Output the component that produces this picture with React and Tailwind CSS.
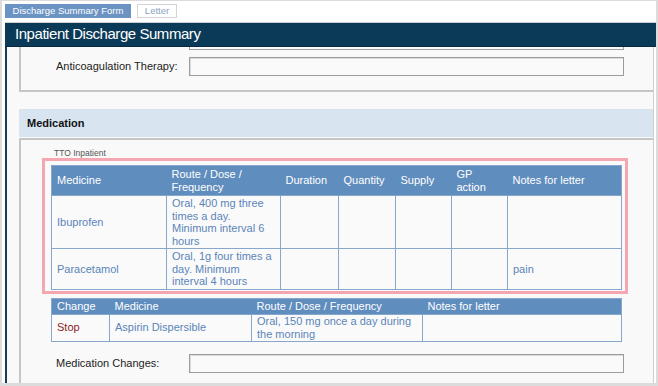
export default function App() {
  const font = "font-['Liberation_Sans',Arial,sans-serif]";
  const th = "text-left align-middle font-normal text-white px-[5px] py-[2px] leading-[12.5px]";
  const td = "align-middle border border-[#87a7cc] px-[5px] py-[1px] leading-[12.5px] text-[#5a85b9]";
  const td2 = "align-middle border border-[#87a7cc] px-[5px] py-0 leading-[12.5px] text-[#5a85b9]";
  const th2 = "text-left align-middle font-normal text-white px-[5px] py-0 leading-[13px]";
  return (
    <div className={`w-[658px] h-[386px] overflow-hidden bg-[#dcdcdc] pl-[2px] pr-[2px] pt-[1px] pb-[3px] flex ${font}`}>
      <div className="flex-1 bg-white flex flex-col overflow-hidden">
        <div className="flex gap-[6px] pl-[3px] pt-[3px] h-[21px] shrink-0">
          <div className="h-[14px] w-[126px] bg-[#6b93c3] text-white text-[9.5px] leading-[14px] flex items-center justify-center">
            Discharge Summary Form
          </div>
          <div className="h-[14px] w-[40px] border border-[#d4d4d4] bg-white text-[#8ca3c2] text-[9.5px] leading-[12px] flex items-center justify-center">
            Letter
          </div>
        </div>
        <div className="ml-[3px] h-[25px] shrink-0 border-t border-[#cfcfcf] border-b border-b-[#062c44] bg-[#0b3a58] pl-[10px] flex items-center text-white text-[15px] tracking-[-0.45px]">
          Inpatient Discharge Summary
        </div>
        <div className="flex-1 ml-[3px] mr-[2px] border-l-2 border-l-[#173d5c] border-r border-r-[#cfcfcf] bg-[#f9f9f9] pl-[12px] flex flex-col overflow-hidden">
          <div className="h-[45px] shrink-0 border-l-2 border-b-2 border-[#c6c6c6]">
            <div className="ml-[168px] w-[435px] h-[3px] border-x border-b border-[#a0a0a0] bg-[#fafafa]" />
            <div className="mt-[7px] flex items-center">
              <div className="w-[168px] pl-[35px] text-[11px] text-[#222]">Anticoagulation Therapy:</div>
              <div className="w-[435px] h-[19px] border border-[#9c9c9c] bg-[#fafafa] shadow-[inset_1px_1px_0_#dcdcdc]" />
            </div>
          </div>

          <div className="mt-[17px] h-[28px] shrink-0 bg-[#d8e4f0] pl-[8px] flex items-center font-bold text-[11px] text-[#111]">
            Medication
          </div>

          <div className="mt-[1px] flex-1 border-l-2 border-t-2 border-[#c6c6c6] pt-[8px]">
            <div className="pl-[33px] h-[10px] text-[8.5px] leading-[10px] text-[#555]">TTO Inpatient</div>
            <div className="ml-[21px] w-[586px] border-[3px] border-[#f4a6b1] pl-[6px] pt-[4px] pr-[4px] pb-[1px]">
              <table className="w-[570px] table-fixed border-collapse border border-[#87a7cc] text-[11px]">
                <colgroup>
                  <col className="w-[115px]" />
                  <col className="w-[114px]" />
                  <col className="w-[58px]" />
                  <col className="w-[57px]" />
                  <col className="w-[56px]" />
                  <col className="w-[56px]" />
                  <col className="w-[114px]" />
                </colgroup>
                <thead>
                  <tr className="h-[29px] bg-[#5f8dbe]">
                    <th className={th}>Medicine</th>
                    <th className={th}>Route / Dose / Frequency</th>
                    <th className={th}>Duration</th>
                    <th className={th}>Quantity</th>
                    <th className={th}>Supply</th>
                    <th className={th}>GP action</th>
                    <th className={th}>Notes for letter</th>
                  </tr>
                </thead>
                <tbody className="bg-[#fafafa]">
                  <tr className="h-[53px]">
                    <td className={td}>Ibuprofen</td>
                    <td className={td}>Oral, 400 mg three times a day. Minimum interval 6 hours</td>
                    <td className={td}></td>
                    <td className={td}></td>
                    <td className={td}></td>
                    <td className={td}></td>
                    <td className={td}></td>
                  </tr>
                  <tr className="h-[40px]">
                    <td className={td}>Paracetamol</td>
                    <td className={td}>Oral, 1g four times a day. Minimum interval 4 hours</td>
                    <td className={td}></td>
                    <td className={td}></td>
                    <td className={td}></td>
                    <td className={td}></td>
                    <td className={td}>pain</td>
                  </tr>
                </tbody>
              </table>
            </div>

            <table className="ml-[30px] mt-[4px] w-[570px] table-fixed border-collapse border border-[#87a7cc] text-[11px]">
              <colgroup>
                <col className="w-[58px]" />
                <col className="w-[142px]" />
                <col className="w-[171px]" />
                <col className="w-[199px]" />
              </colgroup>
              <thead>
                <tr className="h-[16px] bg-[#5f8dbe]">
                  <th className={th2}>Change</th>
                  <th className={th2}>Medicine</th>
                  <th className={th2}>Route / Dose / Frequency</th>
                  <th className={th2}>Notes for letter</th>
                </tr>
              </thead>
              <tbody className="bg-[#fafafa]">
                <tr className="h-[27px]">
                  <td className="align-middle border border-[#87a7cc] px-[5px] py-0 leading-[12.5px] text-[#8a1c1c]">Stop</td>
                  <td className={td2}>Aspirin Dispersible</td>
                  <td className={td2}>Oral, 150 mg once a day during the morning</td>
                  <td className={td2}></td>
                </tr>
              </tbody>
            </table>

            <div className="mt-[12px] flex items-center">
              <div className="w-[168px] pl-[35px] text-[11px] text-[#222]">Medication Changes:</div>
              <div className="w-[435px] h-[19px] border border-[#9c9c9c] bg-[#fafafa] shadow-[inset_1px_1px_0_#dcdcdc]" />
            </div>
          </div>
        </div>
      </div>
    </div>
  );
}
